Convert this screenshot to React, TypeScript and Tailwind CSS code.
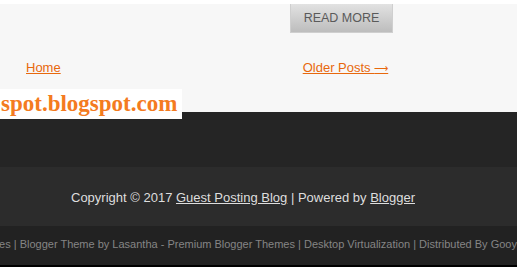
import React from 'react';

const credits =
  'Created By ThemeXpose - Free Blogger Templates | Blogger Theme by Lasantha - Premium Blogger Themes | Desktop Virtualization | Distributed By Gooyaabi Templates';

export default function App() {
  return (
    <div className="relative w-full bg-white font-['Liberation_Sans',Arial,sans-serif]">
      {/* post footer + pager */}
      <div className="h-[4px] bg-white" />
      <div className="h-[108px] bg-[#f7f7f7]">
        <div className="pl-[290px]">
          <button className="h-[29px] w-[103px] border border-t-0 border-[#cfcfcf] bg-gradient-to-b from-[#e2e2e2] to-[#bdbdbd] text-[12.5px] text-[#5a5a5a]">
            READ MORE
          </button>
        </div>
        <div className="mt-[27px] flex text-[13px] leading-[16px] text-[#e8680d]">
          <a href="#" className="ml-[26px] underline">
            Home
          </a>
          <a href="#" className="ml-[242px] underline">
            Older Posts <span className="text-[10px]">⟶</span>
          </a>
        </div>
      </div>

      {/* footer */}
      <div className="h-[55px] bg-[#252525]" />
      <div className="flex h-[59px] items-center justify-center bg-[#2c2c2c] pr-[31px] pt-[2px] text-[13px] text-[#dedede]">
        <span>
          Copyright © 2017{' '}
          <a href="#" className="underline">
            Guest Posting Blog
          </a>{' '}
          | Powered by{' '}
          <a href="#" className="underline">
            Blogger
          </a>
        </span>
      </div>
      <div className="flex h-[39px] items-center overflow-hidden bg-[#222222] pb-[2px] text-[11px] text-[#858585]">
        <span className="ml-[-239px] whitespace-nowrap">{credits}</span>
      </div>
      <div className="h-[2px] bg-black" />
      <div className="h-[10px] bg-white" />

      {/* floating url badge */}
      <div className="absolute left-0 top-[89px] flex h-[30px] w-[182px] items-center bg-white pb-[2px] pl-[1px] font-['Liberation_Serif',serif] text-[23px] font-bold leading-none text-[#f47b20]">
        spot.blogspot.com
      </div>
    </div>
  );
}
